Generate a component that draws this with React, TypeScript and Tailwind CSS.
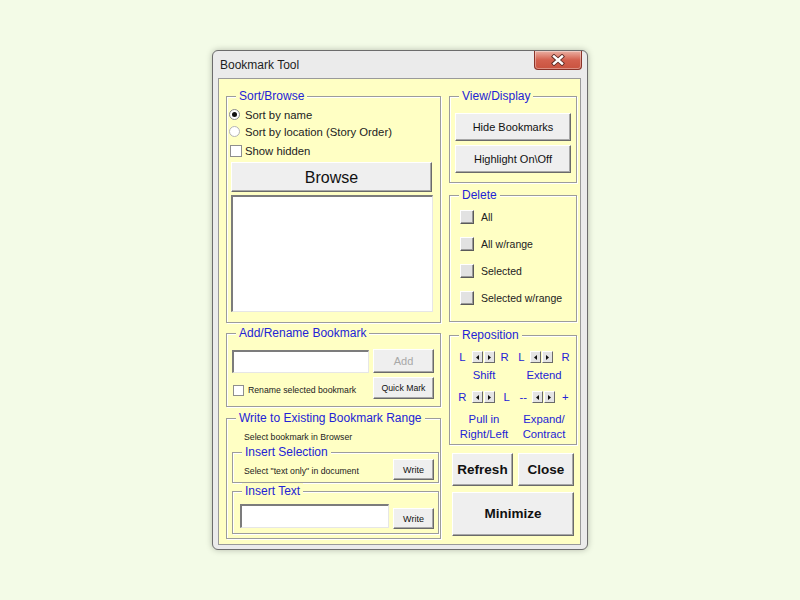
import React from "react";

const Y = "bg-[#ffffc4]";

function Frame({
  title,
  className = "",
  children,
}: {
  title: string;
  className?: string;
  children?: React.ReactNode;
}) {
  return (
    <div
      className={`flex flex-col border border-[#9c9c9c] shadow-[inset_1px_1px_0_#ffffff,1px_1px_0_#ffffff] ${className}`}
    >
      <span
        className={`-mt-[9px] ml-[9px] self-start ${Y} px-[3px] text-[12px] leading-[16px] text-[#2323d6]`}
      >
        {title}
      </span>
      {children}
    </div>
  );
}

function Btn({
  className = "",
  children,
}: {
  className?: string;
  children?: React.ReactNode;
}) {
  return (
    <div
      className={`flex items-center justify-center border border-t-white border-l-white border-r-[#6a6a6a] border-b-[#6a6a6a] bg-[#efefef] shadow-[inset_-1px_-1px_0_#a8a8a8] ${className}`}
    >
      {children}
    </div>
  );
}

function TextBox({ className = "" }: { className?: string }) {
  return (
    <div
      className={`border-t-2 border-l-2 border-r border-b border-t-[#7c7c7c] border-l-[#7c7c7c] border-r-[#e6e6e6] border-b-[#e6e6e6] bg-white ${className}`}
    />
  );
}

function Spin() {
  return (
    <div className="flex gap-[1px]">
      <div className="flex h-[12px] w-[11px] items-center justify-center border border-t-white border-l-white border-r-[#6a6a6a] border-b-[#6a6a6a] bg-[#e4e4e4]">
        <svg width="3" height="5" viewBox="0 0 3 5">
          <path d="M3 0 L0 2.5 L3 5 Z" fill="#111" />
        </svg>
      </div>
      <div className="flex h-[12px] w-[11px] items-center justify-center border border-t-white border-l-white border-r-[#6a6a6a] border-b-[#6a6a6a] bg-[#e4e4e4]">
        <svg width="3" height="5" viewBox="0 0 3 5">
          <path d="M0 0 L3 2.5 L0 5 Z" fill="#111" />
        </svg>
      </div>
    </div>
  );
}

function DelRow({ label }: { label: string }) {
  return (
    <div className="flex h-[27px] items-center pl-[10px]">
      <div className="h-[14px] w-[14px] border border-t-white border-l-white border-r-[#5a5a5a] border-b-[#5a5a5a] bg-[#e2e2e2] shadow-[inset_-1px_-1px_0_#9a9a9a]" />
      <span className="ml-[7px] text-[10.5px] leading-[14px] text-[#222]">
        {label}
      </span>
    </div>
  );
}

export default function App() {
  return (
    <div className="flex h-[600px] w-full items-center justify-center bg-[#f3fbe7] font-['Liberation_Sans',Arial,sans-serif]">
      <div className="flex h-[500px] w-[376px] flex-col rounded-[6px] border border-[#6c6c6c] bg-[#ebebeb] pb-[4px] pl-[5px] pr-[6px] shadow-[0_0_6px_rgba(0,0,0,0.25)]">
        {/* Title bar */}
        <div className="flex h-[27px] items-start justify-between">
          <span className="ml-[2px] mt-[6px] text-[12px] leading-[16px] text-[#1e1e1e]">
            Bookmark Tool
          </span>
          <div className="-mr-[1px] flex h-[19px] w-[48px] items-center justify-center rounded-b-[4px] border border-t-0 border-[#8a3328] bg-linear-to-b from-[#eab0a4] via-[#d3604e] to-[#c9533f] shadow-[inset_0_0_0_1px_rgba(255,255,255,0.35)]">
            <svg width="16" height="12" viewBox="0 0 16 12">
              <path
                d="M4 2.5 L12 9.5 M12 2.5 L4 9.5"
                stroke="#5b2a24"
                strokeWidth="4.2"
                strokeLinecap="square"
              />
              <path
                d="M4 2.5 L12 9.5 M12 2.5 L4 9.5"
                stroke="#ffffff"
                strokeWidth="2.4"
                strokeLinecap="square"
              />
            </svg>
          </div>
        </div>

        {/* Client area */}
        <div
          className={`flex flex-1 gap-[8px] border border-[#9a9a9a] ${Y} pl-[7px] pr-[3px] pt-[17px]`}
        >
          {/* Left column */}
          <div className="flex w-[215px] flex-col">
            <Frame title="Sort/Browse" className="h-[227px]">
              <div className="flex flex-col pl-[2px]">
                <div className="mt-[2px] flex h-[17px] items-center">
                  <div className="flex h-[11px] w-[11px] items-center justify-center rounded-full border border-[#8c8c8c] bg-white">
                    <div className="h-[5px] w-[5px] rounded-full bg-[#111]" />
                  </div>
                  <span className="ml-[5px] text-[11.3px] leading-[14px] text-[#222]">
                    Sort by name
                  </span>
                </div>
                <div className="flex h-[17px] items-center">
                  <div className="h-[11px] w-[11px] rounded-full border border-[#b4b4b4] bg-white" />
                  <span className="ml-[5px] text-[11.3px] leading-[14px] text-[#222]">
                    Sort by location (Story Order)
                  </span>
                </div>
                <div className="mt-[2px] flex h-[17px] items-center pl-[1px]">
                  <div className="h-[12px] w-[12px] border border-[#8e8e8e] bg-white" />
                  <span className="ml-[3px] text-[11.3px] leading-[14px] text-[#222]">
                    Show hidden
                  </span>
                </div>
                <Btn className="ml-[2px] mt-[3px] h-[30px] w-[201px]">
                  <span className="mt-[2px] text-[16px] leading-[18px] text-[#111]">
                    Browse
                  </span>
                </Btn>
                <TextBox className="ml-[2px] mt-[3px] h-[117px] w-[202px]" />
              </div>
            </Frame>

            <Frame title="Add/Rename Bookmark" className="mt-[10px] h-[74px]">
              <div className="flex flex-col pl-[5px]">
                <div className="mt-[8px] flex items-start gap-[4px]">
                  <TextBox className="mt-[1px] h-[23px] w-[137px]" />
                  <Btn className="h-[24px] w-[61px]">
                    <span className="text-[11px] leading-[14px] text-[#a8a8a8]">
                      Add
                    </span>
                  </Btn>
                </div>
                <div className="mt-[4px] flex items-start gap-[4px]">
                  <div className="flex w-[137px] items-center pt-[7px]">
                    <div className="ml-[1px] h-[11px] w-[11px] border border-[#8e8e8e] bg-white" />
                    <span className="ml-[4px] text-[8.7px] leading-[12px] text-[#222]">
                      Rename selected bookmark
                    </span>
                  </div>
                  <Btn className="h-[22px] w-[61px]">
                    <span className="text-[8.7px] leading-[12px] text-[#111]">
                      Quick Mark
                    </span>
                  </Btn>
                </div>
              </div>
            </Frame>

            <Frame
              title="Write to Existing Bookmark Range"
              className="mt-[11px] h-[121px]"
            >
              <span className="ml-[17px] mt-[5px] text-[8.7px] leading-[12px] text-[#222]">
                Select bookmark in Browser
              </span>
              <Frame
                title="Insert Selection"
                className="ml-[5px] mt-[9px] h-[31px] w-[207px]"
              >
                <div className="-mt-[1px] flex h-[21px] items-center justify-between pl-[11px] pr-[4px]">
                  <span className="mt-[2px] text-[8.7px] leading-[12px] text-[#222]">
                    Select "text only" in document
                  </span>
                  <Btn className="h-[21px] w-[41px]">
                    <span className="text-[9px] leading-[12px] text-[#111]">
                      Write
                    </span>
                  </Btn>
                </div>
              </Frame>
              <Frame
                title="Insert Text"
                className="ml-[5px] mt-[8px] h-[43px] w-[207px]"
              >
                <div className="flex items-start gap-[4px] pl-[7px]">
                  <TextBox className="mt-[5px] h-[24px] w-[149px]" />
                  <Btn className="mt-[9px] h-[21px] w-[41px]">
                    <span className="text-[9px] leading-[12px] text-[#111]">
                      Write
                    </span>
                  </Btn>
                </div>
              </Frame>
            </Frame>
          </div>

          {/* Right column */}
          <div className="flex w-[128px] flex-col">
            <Frame title="View/Display" className="h-[87px]">
              <div className="flex flex-col pl-[5px]">
                <Btn className="mt-[9px] h-[28px] w-[116px]">
                  <span className="text-[11px] leading-[14px] text-[#111]">
                    Hide Bookmarks
                  </span>
                </Btn>
                <Btn className="mt-[4px] h-[28px] w-[116px]">
                  <span className="text-[11px] leading-[14px] text-[#111]">
                    Highlight On\Off
                  </span>
                </Btn>
              </div>
            </Frame>

            <Frame title="Delete" className="mt-[12px] h-[127px]">
              <div className="flex flex-col">
                <DelRow label="All" />
                <DelRow label="All w/range" />
                <DelRow label="Selected" />
                <DelRow label="Selected w/range" />
              </div>
            </Frame>

            <Frame title="Reposition" className="mt-[13px] h-[110px]">
              <div className="grid grid-cols-2 pl-[4px] pr-[2px] text-[11.3px] text-[#2323d6]">
                <div className="flex flex-col items-center">
                  <div className="mt-[7px] flex h-[14px] items-center gap-[6px]">
                    <span className="leading-[14px]">L</span>
                    <Spin />
                    <span className="leading-[14px]">R</span>
                  </div>
                  <span className="mt-[4px] leading-[15px]">Shift</span>
                </div>
                <div className="flex flex-col items-center">
                  <div className="mt-[7px] flex h-[14px] items-center gap-[5px]">
                    <span className="leading-[14px]">L</span>
                    <Spin />
                    <span className="ml-[4px] leading-[14px]">R</span>
                  </div>
                  <span className="mt-[4px] leading-[15px]">Extend</span>
                </div>
                <div className="flex flex-col items-center">
                  <div className="mt-[7px] flex h-[14px] items-center gap-[6px]">
                    <span className="leading-[14px]">R</span>
                    <Spin />
                    <span className="ml-[2px] leading-[14px]">L</span>
                  </div>
                  <span className="mt-[8px] text-center leading-[15px]">
                    Pull in
                    <br />
                    Right/Left
                  </span>
                </div>
                <div className="flex flex-col items-center">
                  <div className="mt-[7px] flex h-[14px] items-center gap-[5px]">
                    <span className="leading-[14px]">--</span>
                    <Spin />
                    <span className="ml-[2px] leading-[14px]">+</span>
                  </div>
                  <span className="mt-[8px] text-center leading-[15px]">
                    Expand/
                    <br />
                    Contract
                  </span>
                </div>
              </div>
            </Frame>

            <div className="ml-[3px] mt-[8px] flex gap-[5px]">
              <Btn className="h-[33px] w-[61px]">
                <span className="text-[13.5px] font-bold leading-[16px] text-[#111]">
                  Refresh
                </span>
              </Btn>
              <Btn className="h-[33px] w-[56px]">
                <span className="text-[13.5px] font-bold leading-[16px] text-[#111]">
                  Close
                </span>
              </Btn>
            </div>
            <Btn className="ml-[3px] mt-[6px] h-[44px] w-[122px]">
              <span className="text-[13.5px] font-bold leading-[16px] text-[#111]">
                Minimize
              </span>
            </Btn>
          </div>
        </div>
      </div>
    </div>
  );
}
